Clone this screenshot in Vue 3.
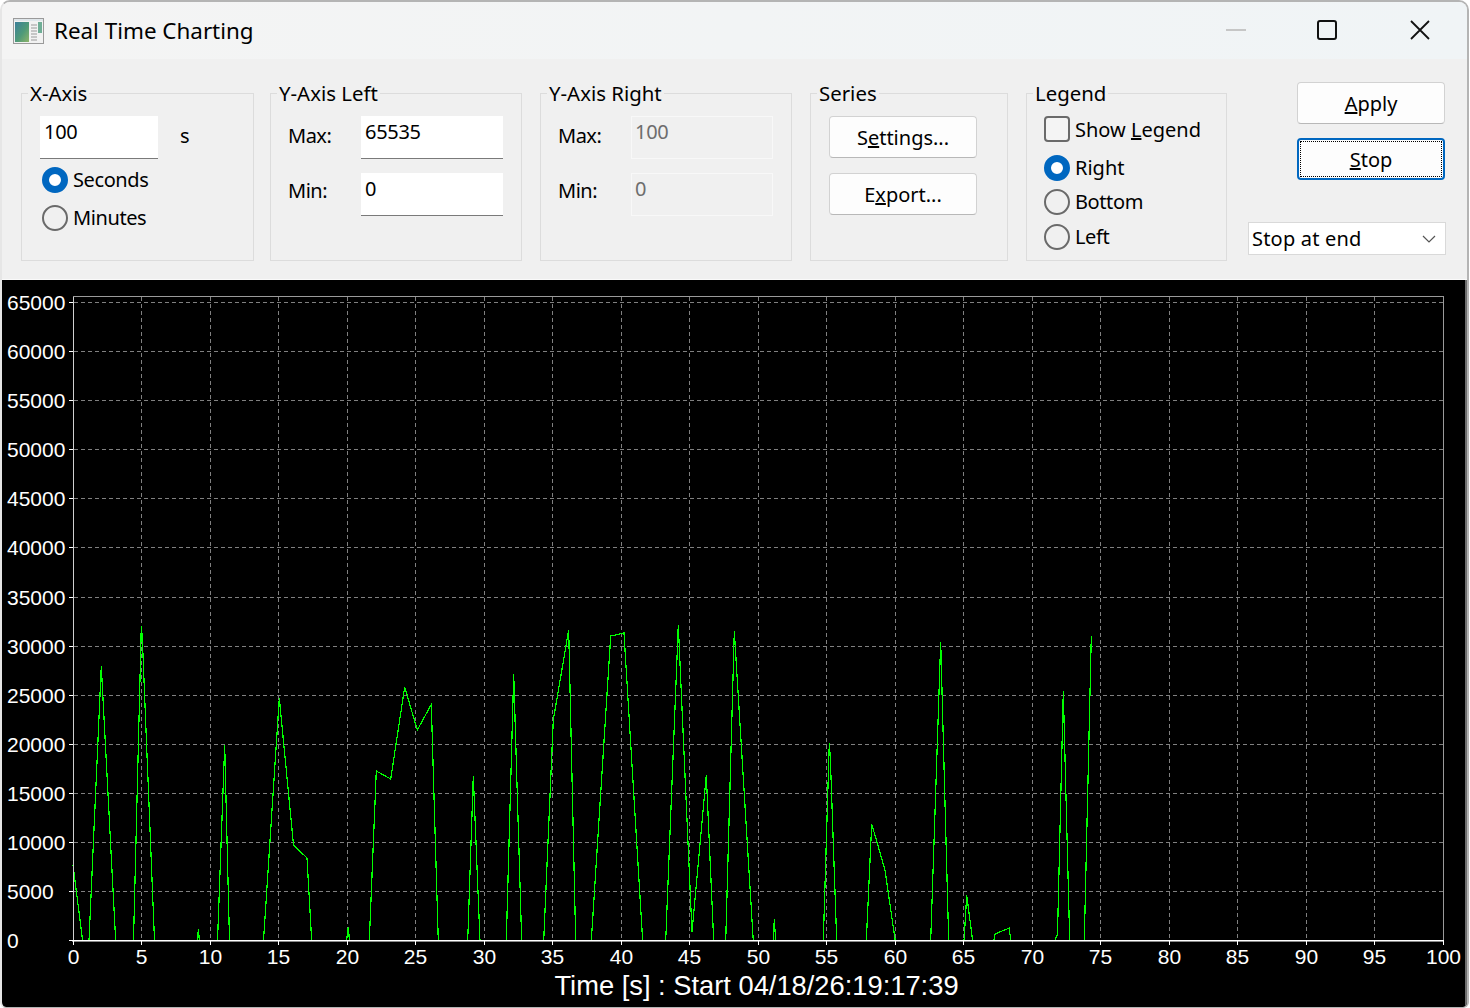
<script setup>
const X0 = 73, PXS = 13.7, Y0 = 940.99, STEP = 49.14
const xticks = Array.from({ length: 21 }, (_, i) => ({ v: i * 5, x: Math.floor(X0 + i * 5 * PXS) + 0.5 }))
const yticks = Array.from({ length: 14 }, (_, i) => ({ v: i * 5000, y: Math.floor(Y0 - i * STEP) + 0.5 }))
const trace = [
  [73,865],[82.7,941],[89,941],[101.3,666],[115.7,941],[133.5,941],[141.3,626],[142.3,638],[154.5,941],
  [197,941],[198.5,929],[199.3,941],[217.5,941],[224.7,745],[229.5,941],[263.5,941],[279.3,698],[293.5,845],[307,858],[311.7,941],
  [346.5,941],[348.3,927],[349.5,941],[369.3,941],[376.3,771],[390.7,779],[404.7,687],[417.3,730],[431.3,704.5],[438.3,941],
  [467.7,941],[473.3,776],[480,941],[506.3,941],[513.7,674],[521.7,941],[543.7,941],[553.3,720],[568.7,630],[575.7,941],
  [591.3,941],[610.7,636],[624,633],[642.7,941],[665.7,941],[678.3,625],[692,932],[706.3,775],[713.7,941],[725.7,941],[734.3,631],[753.3,941],
  [773.3,941],[774.3,919],[775.7,941],[823.3,941],[829.3,743],[830.3,757],[836.7,941],[866.3,941],[871.7,824],[885,870],[895.3,941],
  [930.7,941],[940.7,642],[948.7,941],[964,941],[966.7,895],[972.7,941],[993.7,941],[995,934],[1009.3,928],[1010.7,941],
  [1054.7,941],[1057.5,934],[1063.3,691],[1069.7,941],[1084.3,941],[1091.3,636]
].map(p => p.join(',')).join(' ')
</script>

<template>
  <div class="window">
    <header class="titlebar">
      <svg class="app-icon" width="32" height="27" viewBox="0 0 32 27">
        <defs>
          <linearGradient id="panel" x1="0" y1="0" x2="1" y2="1">
            <stop offset="0" stop-color="#3b7f9a" />
            <stop offset="0.55" stop-color="#4f9a78" />
            <stop offset="1" stop-color="#8fb46a" />
          </linearGradient>
        </defs>
        <rect x="0.5" y="0.5" width="30" height="25" fill="#f2f2f2" stroke="#9a9a9a" />
        <rect x="1" y="1" width="29" height="2" fill="#dfe6ea" />
        <rect x="2" y="4" width="14" height="20" fill="url(#panel)" />
        <path d="M18 7h6M18 10h6M18 13h6M18 16h6M18 19h6M18 22h6" stroke="#b8b8b8" stroke-width="1.4" />
        <rect x="25" y="4" width="4" height="11" fill="#6fae96" />
      </svg>
      <span class="title">Real Time Charting</span>
      <div class="caption-buttons">
        <svg class="cap-min" width="22" height="22" viewBox="0 0 22 22"><path d="M1 11h20" stroke="#c6c6c6" stroke-width="2" /></svg>
        <svg width="22" height="22" viewBox="0 0 22 22"><rect x="2" y="2" width="18" height="18" rx="2" fill="none" stroke="#111" stroke-width="2" /></svg>
        <svg width="22" height="22" viewBox="0 0 22 22"><path d="M2 2l18 18M20 2L2 20" stroke="#111" stroke-width="1.8" /></svg>
      </div>
    </header>

    <section class="toolbar">
      <div class="group g-x">
        <span class="legend">X-Axis</span>
        <div class="row x-row">
          <div class="edit w118">100</div>
          <span class="unit">s</span>
        </div>
        <div class="radio r-lg"><i class="dot on"></i><span>Seconds</span></div>
        <div class="radio r-lg"><i class="dot"></i><span>Minutes</span></div>
      </div>

      <div class="group g-y">
        <span class="legend">Y-Axis Left</span>
        <div class="row"><span class="lab">Max:</span><div class="edit w142">65535</div></div>
        <div class="row"><span class="lab">Min:</span><div class="edit w142">0</div></div>
      </div>

      <div class="group g-y">
        <span class="legend">Y-Axis Right</span>
        <div class="row"><span class="lab">Max:</span><div class="edit w142 off">100</div></div>
        <div class="row"><span class="lab">Min:</span><div class="edit w142 off">0</div></div>
      </div>

      <div class="group g-s">
        <span class="legend">Series</span>
        <button class="btn">S<u>e</u>ttings...</button>
        <button class="btn">E<u>x</u>port...</button>
      </div>

      <div class="group g-l">
        <span class="legend">Legend</span>
        <div class="radio r-check"><i class="box"></i><span>Show <u>L</u>egend</span></div>
        <div class="radio r-first"><i class="dot on"></i><span>Right</span></div>
        <div class="radio r-sm"><i class="dot"></i><span>Bottom</span></div>
        <div class="radio r-sm r-last"><i class="dot"></i><span>Left</span></div>
      </div>

      <div class="actions">
        <button class="btn"><u>A</u>pply</button>
        <button class="btn focus"><span class="focus-ring"><u>S</u>top</span></button>
        <div class="combo">
          <span>Stop at end</span>
          <svg width="14" height="8" viewBox="0 0 14 8"><path d="M1 1l6 6 6-6" fill="none" stroke="#555" stroke-width="1.2" /></svg>
        </div>
      </div>
    </section>

    <svg class="chart" width="1463" height="727" viewBox="2 280 1463 727">
      <g stroke="#808080" stroke-width="1" stroke-dasharray="4 3" shape-rendering="crispEdges">
        <line v-for="t in xticks.slice(1, 20)" :key="'v' + t.v" :x1="t.x" :x2="t.x" y1="297" y2="940" />
        <line v-for="t in yticks.slice(1)" :key="'h' + t.v" x1="74" x2="1443" :y1="t.y" :y2="t.y" />
      </g>
      <g stroke="#9a9a9a" shape-rendering="crispEdges">
        <line x1="73" x2="1444" y1="296.5" y2="296.5" />
        <line x1="1443.5" x2="1443.5" y1="297" y2="940" />
      </g>
      <polyline :points="trace" fill="none" stroke="#00ff00" stroke-width="1.2" shape-rendering="crispEdges" />
      <g stroke="#ffffff" shape-rendering="crispEdges">
        <line x1="73.5" x2="73.5" y1="297" y2="941" stroke="#d0d0d0" />
        <line x1="72" x2="1444" y1="940.5" y2="940.5" />
        <line x1="72" x2="1444" y1="941.5" y2="941.5" stroke="#8a8a8a" />
        <line v-for="t in xticks" :key="'tx' + t.v" :x1="t.x" :x2="t.x" y1="941" y2="945" />
        <line v-for="t in yticks" :key="'ty' + t.v" x1="69" x2="73" :y1="t.y" :y2="t.y" />
      </g>
      <g class="axis-text" fill="#fff">
        <text v-for="t in yticks" :key="'ly' + t.v" x="7" :y="t.y + 7.5">{{ t.v }}</text>
        <text v-for="t in xticks" :key="'lx' + t.v" :x="t.x" y="964" text-anchor="middle">{{ t.v }}</text>
      </g>
      <text class="axis-title" x="756.5" y="995" text-anchor="middle" fill="#fff">Time [s] : Start 04/18/26:19:17:39</text>
    </svg>
  </div>
</template>

<style>
html, body { margin: 0; background: #fff; }
</style>

<style scoped>
.window {
  box-sizing: border-box;
  width: 1469px;
  height: 1008px;
  display: flex;
  flex-direction: column;
  background: #f0f0f0;
  border: 1px solid #b4b4b4;
  border-top-width: 2px;
  border-right-width: 2px;
  border-left: 2px solid #e6e6e6;
  border-radius: 10px 10px 6px 6px;
  overflow: hidden;
  font-family: "Noto Sans", sans-serif;
  font-size: 20px;
  color: #000;
}
.titlebar {
  height: 57px;
  flex: none;
  display: flex;
  align-items: center;
  background: linear-gradient(90deg, #f4f4f4, #f0f4f6);
}
.app-icon { margin: 1px 0 0 11px; }
.title { margin-left: 9px; font-size: 22.4px; }
.caption-buttons {
  margin-left: auto;
  display: flex;
  gap: 71px;
  margin-right: 36px;
  margin-top: -1px;
}
.cap-min { margin-right: -2px; }
.toolbar {
  height: 221px;
  flex: none;
  display: flex;
  align-items: flex-start;
  padding-left: 19px;
  box-sizing: border-box;
  border-bottom: 1px solid #fafafa;
}
.group {
  position: relative;
  box-sizing: border-box;
  height: 168px;
  margin-top: 34px;
  margin-right: 16px;
  border: 1px solid #dcdcdc;
  padding-top: 22px;
}
.legend {
  position: absolute;
  top: -15px;
  left: 6px;
  padding: 0 2px;
  line-height: 28px;
  background: #f0f0f0;
  font-size: 20.4px;
}
.g-x { width: 233px; padding-left: 18px; }
.g-y { width: 252px; margin-right: 18px; padding-left: 17px; }
.g-s { width: 198px; margin-right: 18px; padding-left: 18px; }
.g-l { width: 201px; margin-right: 21px; padding-left: 17px; padding-top: 22px; }
.row { display: flex; align-items: center; margin-bottom: 14px; }
.x-row { margin-bottom: 2px; }
.lab { width: 73px; padding-bottom: 5px; letter-spacing: -0.5px; }
.row + .row .lab { padding-bottom: 9px; }
.unit { margin-left: 22px; padding-bottom: 5px; }
.edit {
  box-sizing: border-box;
  height: 43px;
  padding: 0 4px;
  line-height: 31px;
  letter-spacing: -0.3px;
  background: #fff;
  border-bottom: 1px solid #7a7a7a;
}
.w118 { width: 118px; }
.w142 { width: 142px; }
.off {
  background: #f0f0f0;
  border: 1px solid #f8f8f8;
  color: #6d6d6d;
  padding: 0 3px;
  line-height: 29px;
}
.radio { display: flex; align-items: center; gap: 5px; }
.g-x .radio { margin-left: 2px; }
.r-lg { height: 38px; }
.r-lg span, .r-first span, .r-sm span { padding-bottom: 2px; }
.r-lg span, .r-sm span { letter-spacing: -0.4px; }
.r-check { height: 26px; }
.r-first { height: 34px; margin-top: 9px; }
.r-sm { height: 34px; }
.r-last { margin-top: 1px; }
.dot {
  box-sizing: border-box;
  width: 26px;
  height: 26px;
  flex: none;
  border-radius: 50%;
  border: 2px solid #6a6a6a;
  background: #f0f0f0;
}
.dot.on { border: 7.5px solid #0067c0; background: #fff; }
.box {
  box-sizing: border-box;
  width: 26px;
  height: 26px;
  flex: none;
  border: 2px solid #6a6a6a;
  border-radius: 4px;
  background: #f4f4f4;
}
.btn {
  display: block;
  box-sizing: border-box;
  width: 148px;
  height: 42px;
  padding: 0;
  background: #fdfdfd;
  border: 1px solid #d2d2d2;
  border-bottom-color: #b8b8b8;
  border-radius: 4px;
  font: inherit;
  color: #000;
}
.g-s .btn:first-of-type { margin-bottom: 15px; }
.actions {
  width: 198px;
  margin-top: 23px;
  display: flex;
  flex-direction: column;
  align-items: flex-end;
}
.actions .btn { margin-right: 1px; margin-bottom: 14px; }
.focus { border: 2px solid #0067c0; padding: 1px; }
.focus-ring {
  box-sizing: border-box;
  display: flex;
  align-items: center;
  justify-content: center;
  height: 100%;
  border: 1px dotted #000;
}
.combo {
  box-sizing: border-box;
  width: 198px;
  height: 33px;
  margin-top: 28px;
  padding: 0 9px 0 3px;
  display: flex;
  align-items: center;
  justify-content: space-between;
  background: #fff;
  border: 1px solid #d9d9d9;
  letter-spacing: 0.2px;
}
.chart {
  display: block;
  flex: none;
  background: #000;
  box-sizing: content-box;
  border-right: 2px solid #6e6e6e;
}
.axis-text { font: 21px "Liberation Sans", Arial, sans-serif; }
.axis-title { font: 27.3px "Liberation Sans", Arial, sans-serif; }
</style>
